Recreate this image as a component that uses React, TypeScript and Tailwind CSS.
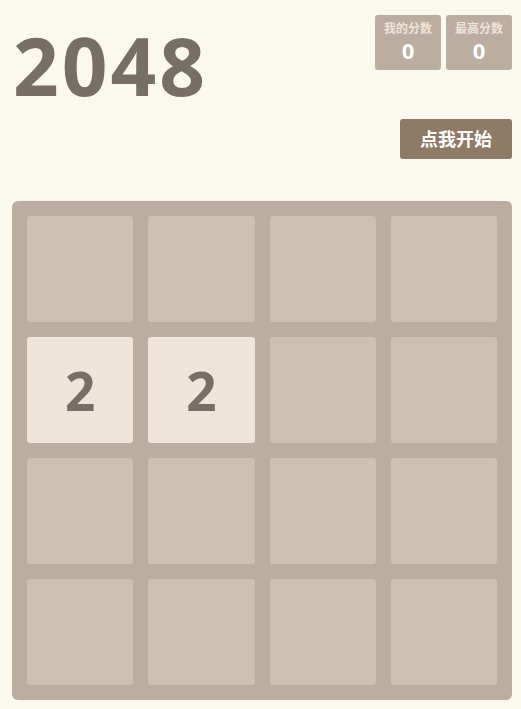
import React from 'react';

const board: number[][] = [
  [0, 0, 0, 0],
  [2, 2, 0, 0],
  [0, 0, 0, 0],
  [0, 0, 0, 0],
];

const font = { fontFamily: '"Open Sans", "Noto Sans CJK SC", sans-serif' };

const ScoreBox: React.FC<{ label: string; value: number }> = ({ label, value }) => (
  <div className="w-[66px] h-[55px] bg-[#bbada0] rounded-[3px] flex flex-col items-center pt-[6px]">
    <span className="text-[12px] leading-[16px] font-bold text-[#eee4da]">{label}</span>
    <span className="text-[22px] leading-[26px] font-bold text-white">{value}</span>
  </div>
);

export default function App() {
  return (
    <div className="min-h-[709px] bg-[#faf8ef]" style={font}>
      <div className="w-[500px] ml-[12px] pt-[15px]">
        <div className="flex justify-between">
          <h1 className="text-[80px] leading-none font-bold text-[#776e65] ml-[1px] mt-[10px] tracking-[3px]">2048</h1>
          <div className="flex flex-col items-end">
            <div className="flex gap-[5px]">
              <ScoreBox label="我的分数" value={0} />
              <ScoreBox label="最高分数" value={0} />
            </div>
            <button className="mt-[49px] w-[112px] h-[40px] bg-[#8f7a66] rounded-[3px] text-white text-[18px] font-bold">
              点我开始
            </button>
          </div>
        </div>

        <div className="mt-[42px] bg-[#bbada0] rounded-[6px] p-[15px] grid grid-cols-4 gap-[15px]">
          {board.flat().map((v, i) => (
            <div
              key={i}
              className={`h-[106px] rounded-[3px] flex items-center justify-center ${v ? 'bg-[#eee4da]' : 'bg-[#cdc1b4]'}`}
            >
              {v > 0 && <span className="text-[53px] font-bold text-[#776e65] leading-none">{v}</span>}
            </div>
          ))}
        </div>
      </div>
    </div>
  );
}
